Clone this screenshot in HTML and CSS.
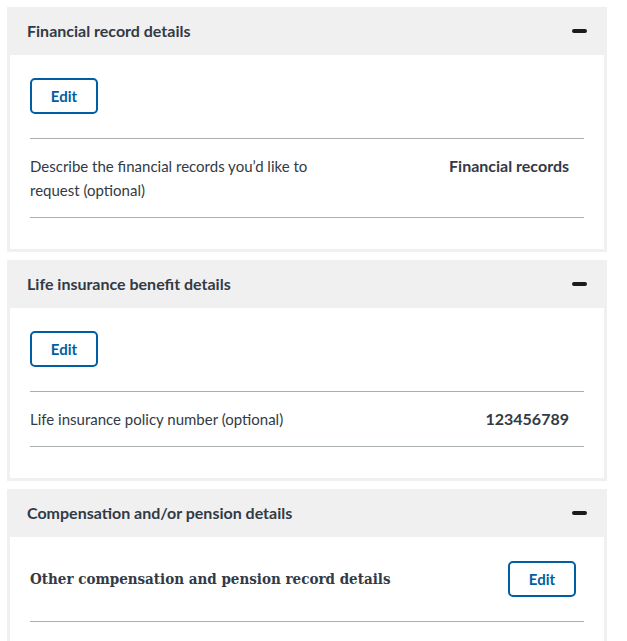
FILE: index.html
```html
<!DOCTYPE html>
<html lang="en">
<head>
<meta charset="utf-8">
<title>Review</title>
<link rel="stylesheet" href="styles.css">
</head>
<body>
<div class="page">
  <section class="acc">
    <div class="acc-head">
      <h3 class="acc-title">Financial record details</h3>
      <span class="minus" aria-hidden="true"></span>
    </div>
    <div class="acc-body">
      <div class="edit-row"><button class="btn">Edit</button></div>
      <dl class="review">
        <div class="review-row">
          <dt class="label">Describe the financial records you’d like to request (optional)</dt>
          <dd class="value">Financial records</dd>
        </div>
      </dl>
    </div>
  </section>

  <section class="acc">
    <div class="acc-head">
      <h3 class="acc-title">Life insurance benefit details</h3>
      <span class="minus" aria-hidden="true"></span>
    </div>
    <div class="acc-body">
      <div class="edit-row"><button class="btn">Edit</button></div>
      <dl class="review">
        <div class="review-row">
          <dt class="label">Life insurance policy number (optional)</dt>
          <dd class="value">123456789</dd>
        </div>
      </dl>
    </div>
  </section>

  <section class="acc">
    <div class="acc-head">
      <h3 class="acc-title">Compensation and/or pension details</h3>
      <span class="minus" aria-hidden="true"></span>
    </div>
    <div class="acc-body acc-body-open">
      <div class="sub-head">
        <h4 class="sub-title">Other compensation and pension record details</h4>
        <button class="btn">Edit</button>
      </div>
    </div>
  </section>
</div>
</body>
</html>
```

FILE: styles.css
```css
* { box-sizing: border-box; }

html, body {
  margin: 0;
  padding: 0;
  background: #ffffff;
}

body {
  font-family: "Lato", "Liberation Sans", sans-serif;
  color: #323a45;
  font-size: 16px;
  line-height: 24px;
}

.page {
  padding: 7px 20px 0 7px;
  display: flex;
  flex-direction: column;
  gap: 8px;
}

.acc {
  width: 600px;
}

.acc-head {
  background: #f0f0f0;
  height: 48px;
  display: flex;
  align-items: center;
  justify-content: space-between;
  padding: 0 20px 0 20px;
}

.acc-title {
  margin: 0;
  font-size: 16px;
  font-weight: 700;
  color: #323a45;
}

.minus {
  display: block;
  width: 15px;
  height: 4px;
  border-radius: 2px;
  background: #1b1b1b;
}

.acc-body {
  border: 3px solid #f0f0f0;
  border-top: 0;
  padding: 23px 20px 31px 20px;
  background: #fff;
}

.acc-body-open {
  padding-top: 24px;
  padding-bottom: 40px;
}

.edit-row {
  padding-bottom: 24px;
  border-bottom: 1px solid #a9aeb1;
}

.btn {
  width: 68px;
  height: 36px;
  border: 2px solid #005ea2;
  border-radius: 5px;
  background: #fff;
  color: #005ea2;
  font-family: "Lato", "Liberation Sans", sans-serif;
  font-weight: 700;
  font-size: 15px;
  padding: 0;
}

.review {
  margin: 0;
}

.review-row {
  display: flex;
  justify-content: space-between;
  align-items: flex-start;
  padding: 15px 15px 15px 0;
  border-bottom: 1px solid #a9aeb1;
}

.label {
  margin: 0;
  width: 300px;
  font-size: 15px;
}

.value {
  margin: 0;
  font-weight: 700;
  font-size: 16px;
  text-align: right;
}

.sub-head {
  display: flex;
  justify-content: space-between;
  align-items: center;
  padding: 0 8px 24px 0;
  border-bottom: 1px solid #a9aeb1;
}

.sub-title {
  margin: 0;
  font-family: "DejaVu Serif Condensed", "Liberation Serif", serif;
  font-stretch: condensed;
  font-size: 15px;
  font-weight: 700;
  color: #323a45;
}
```
